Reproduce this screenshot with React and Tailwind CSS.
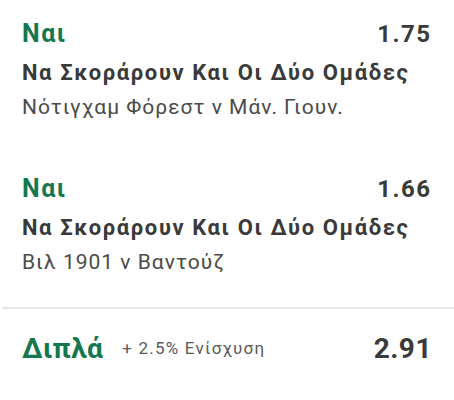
export default function App() {
  const legs = [
    { odds: "1.75", match: "Νότιγχαμ Φόρεστ ν Μάν. Γιουν." },
    { odds: "1.66", match: "Βιλ 1901 ν Βαντούζ" },
  ];
  return (
    <div className="w-[454px] h-[400px] bg-white overflow-hidden" style={{ fontFamily: "Roboto, 'Noto Sans', sans-serif" }}>
      <div className="flex flex-col gap-[49px] pt-[18px] pl-[22px] pr-[24px]">
        {legs.map((l, i) => (
          <div key={i} className="flex flex-col">
            <div className="flex justify-between items-center h-[32px]">
              <span className="text-[25px] leading-[32px] font-bold text-[#15774f] tracking-[1.5px]">Ναι</span>
              <span className="text-[24px] leading-[32px] font-bold text-[#3a3a3a] tracking-[1.5px] -mr-[1.5px]">{l.odds}</span>
            </div>
            <div className="mt-[6px] text-[22px] leading-[34px] font-bold text-[#3a3a3a] tracking-[1.6px] whitespace-nowrap">Να Σκοράρουν Και Οι Δύο Ομάδες</div>
            <div className="text-[21px] leading-[34px] text-[#4a4a4a] tracking-[1px] whitespace-nowrap">{l.match}</div>
          </div>
        ))}
      </div>
      <div className="mt-[28px] ml-[2px] h-[2px] bg-[#e8e8e8]" />
      <div className="flex items-center pt-[20px] pl-[22px] pr-[22px] h-[60px]">
        <span className="text-[28px] leading-[40px] font-bold text-[#15774f] tracking-[0.5px]">Διπλά</span>
        <span className="ml-[19px] text-[17px] text-[#5a5a5a] tracking-[1.2px] whitespace-nowrap">+ 2.5% Ενίσχυση</span>
        <span className="ml-auto text-[28px] leading-[40px] font-bold text-[#3a3a3a] tracking-[0.5px]">2.91</span>
      </div>
    </div>
  );
}
